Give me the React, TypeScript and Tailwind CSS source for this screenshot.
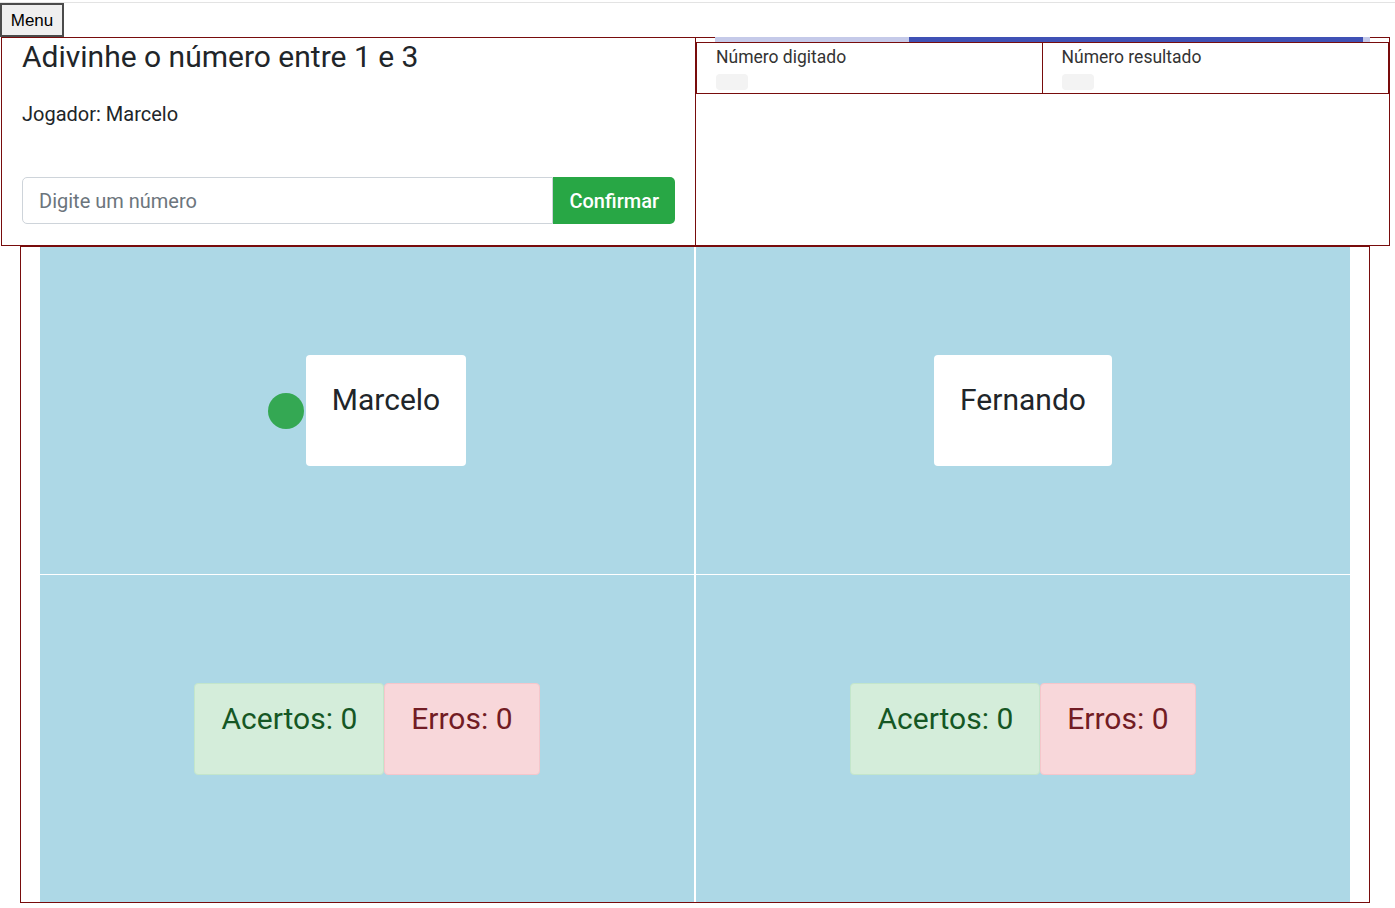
import React from 'react'

const players = [
  { name: 'Marcelo', active: true },
  { name: 'Fernando', active: false },
]

const App: React.FC = () => {
  return (
    <div className="font-['Roboto',sans-serif] text-[#212529] bg-white">
      {/* top rule + menu */}
      <div className="mt-[2px] h-px bg-[#e3e3e3]"></div>
      <button className="block w-[64px] h-[34px] border-2 border-[#4b4b4b] bg-[#efefef] font-['Liberation_Sans',Arial,sans-serif] text-[17px] text-black leading-none">
        Menu
      </button>

      {/* Game header */}
      <div className="flex">
        <div className="ml-px w-[695px] h-[209px] border border-[#780c0c] px-[20px]">
          <h1 className="mt-px text-[30px] leading-[36px] font-normal">Adivinhe o número entre 1 e 3</h1>
          <p className="mt-[24px] text-[20px] leading-[30px]">Jogador: Marcelo</p>
          <div className="mt-[48px] flex h-[47px]">
            <input
              type="text"
              placeholder="Digite um número"
              className="flex-1 min-w-0 border border-[#ced4da] rounded-l-[5px] px-4 text-[20px] placeholder:text-[#6c757d] outline-none"
            />
            <button className="px-4 bg-[#28a745] text-white text-[20px] font-medium rounded-r-[5px]">Confirmar</button>
          </div>
        </div>

        <div className="relative w-[694px] h-[209px] border border-[#780c0c] border-l-0">
          <div className="absolute -top-px left-[19px] right-[19px] h-[5px] flex">
            <div className="w-[194px] bg-[#c5cae9]"></div>
            <div className="flex-1 bg-[#3f51b5]"></div>
            <div className="w-[7px] bg-[#c5cae9]"></div>
          </div>
          <div className="mt-[4px] grid grid-cols-2">
            {['Número digitado', 'Número resultado'].map((label, i) => (
              <div
                key={label}
                className={`h-[52px] border border-[#780c0c] pl-[19px] pt-[2px] ${i === 1 ? 'border-l-0' : ''}`}
              >
                <div className="text-[17.5px] leading-[24px] text-[#333]">{label}</div>
                <div className="mt-[5px] w-[32px] h-[16px] rounded-[4px] bg-[#f3f3f3]"></div>
              </div>
            ))}
          </div>
        </div>
      </div>

      {/* Board */}
      <div className="ml-[20px] w-[1350px] h-[657px] border border-[#780c0c] px-[19px]">
        <div className="grid grid-cols-2 grid-rows-2 gap-x-[2px] gap-y-px h-full bg-white">
          {players.map((p) => (
            <div key={p.name} className="bg-[#add8e6] flex items-center justify-center">
              {p.active && <div className="w-[36px] h-[36px] rounded-full bg-[#34a853] mr-[2px]"></div>}
              <div className="bg-white rounded-[4px] h-[111px] px-[26px] pt-[27px] text-[30px] leading-[36px]">
                {p.name}
              </div>
            </div>
          ))}
          {players.map((p) => (
            <div key={p.name + '-score'} className="bg-[#add8e6] flex items-center justify-center pb-[19px]">
              <div className="h-[92px] px-[26px] pt-[17px] bg-[#d4edda] border border-[#c3e6cb] rounded-[4px] text-[#155724] text-[30px] leading-[36px]">
                Acertos: 0
              </div>
              <div className="h-[92px] px-[26px] pt-[17px] bg-[#f8d7da] border border-[#f5c6cb] rounded-[4px] text-[#721c24] text-[30px] leading-[36px]">
                Erros: 0
              </div>
            </div>
          ))}
        </div>
      </div>
    </div>
  )
}

export default App
